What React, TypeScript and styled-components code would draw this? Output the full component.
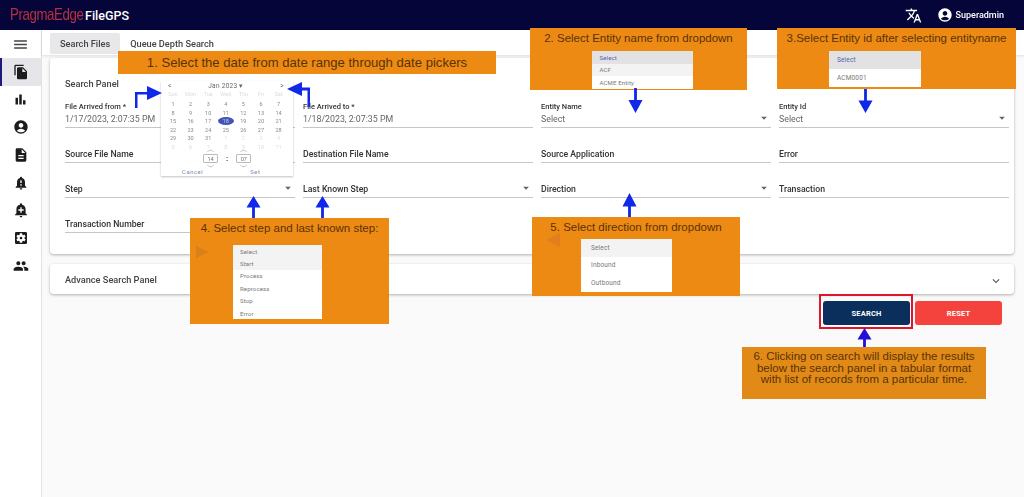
import styled, { createGlobalStyle } from 'styled-components';
import {
  MdAccountCircle,
  MdAddAlert,
  MdArrowDropDown,
  MdBarChart,
  MdDescription,
  MdExpandMore,
  MdFileCopy,
  MdMenu,
  MdNotificationImportant,
  MdPeople,
  MdSettingsApplications,
  MdTranslate,
} from 'react-icons/md';

const DAYS = ['Sun', 'Mon', 'Tue', 'Wed', 'Thu', 'Fri', 'Sat'];
const WEEKS = [
  [1, 2, 3, 4, 5, 6, 7],
  [8, 9, 10, 11, 12, 13, 14],
  [15, 16, 17, 18, 19, 20, 21],
  [22, 23, 24, 25, 26, 27, 28],
  [29, 30, 31, 1, 2, 3, 4],
  [5, 6, 7, 8, 9, 10, 11],
];

const FIELDS = [
  { label: 'File Arrived from *', value: '1/17/2023, 2:07:35 PM' },
  { label: 'File Arrived to *', value: '1/18/2023, 2:07:35 PM' },
  { label: 'Entity Name', value: 'Select', select: true },
  { label: 'Entity Id', value: 'Select', select: true },
  { label: 'Source File Name' },
  { label: 'Destination File Name' },
  { label: 'Source Application' },
  { label: 'Error' },
  { label: 'Step', select: true },
  { label: 'Last Known Step', select: true },
  { label: 'Direction', select: true },
  { label: 'Transaction' },
  { label: 'Transaction Number' },
];

function Arrow({ cx, y, h, dir, dark }: { cx: number; y: number; h: number; dir: 'up' | 'down'; dark?: boolean }) {
  const fill = dark ? '#2410d8' : '#1028e8';
  return (
    <ArrowSvg $x={cx - 7.5} $y={y} width="15" height={h} viewBox="0 0 16 27" preserveAspectRatio="none">
      {dir === 'up' ? (
        <path d="M8 0 L15.5 14 H9.5 V27 H6.5 V14 H0.5 Z" fill={fill} />
      ) : (
        <path d="M6.5 0 H9.5 V13 H15.5 L8 27 L0.5 13 H6.5 Z" fill={fill} />
      )}
    </ArrowSvg>
  );
}

export default function App() {
  return (
    <>
      <GlobalStyle />
      <Page>
        <Header>
          <Logo>
            <LogoMark>PragmaEdge</LogoMark>
            <LogoName>FileGPS</LogoName>
          </Logo>
          <HeaderRight>
            <MdTranslate size={17} />
            <UserBox>
              <MdAccountCircle size={16} />
              Superadmin
            </UserBox>
          </HeaderRight>
        </Header>
        <Body>
          <Sidebar>
            <MenuButton>
              <MdMenu size={17} />
            </MenuButton>
            <NavItem $active>
              <MdFileCopy size={16} />
            </NavItem>
            <NavItem>
              <MdBarChart size={15} />
            </NavItem>
            <NavItem>
              <MdAccountCircle size={16} />
            </NavItem>
            <NavItem>
              <MdDescription size={16} />
            </NavItem>
            <NavItem>
              <MdNotificationImportant size={16} />
            </NavItem>
            <NavItem>
              <MdAddAlert size={16} />
            </NavItem>
            <NavItem>
              <MdSettingsApplications size={16} />
            </NavItem>
            <NavItem>
              <MdPeople size={16} />
            </NavItem>
          </Sidebar>
          <Main>
            <Tabs>
              <Tab $active>Search Files</Tab>
              <Tab>Queue Depth Search</Tab>
            </Tabs>
            <Content>
              <Panel>
                <PanelTitle>Search Panel</PanelTitle>
                <FieldGrid>
                  {FIELDS.map((field) => (
                    <Field key={field.label} $tall={!!field.value}>
                      {field.value ? (
                        <>
                          <SmallLabel>{field.label}</SmallLabel>
                          <FieldValue>{field.value}</FieldValue>
                        </>
                      ) : (
                        <PlainLabel>{field.label}</PlainLabel>
                      )}
                      {field.select && (
                        <Caret>
                          <MdArrowDropDown size={14} />
                        </Caret>
                      )}
                    </Field>
                  ))}
                </FieldGrid>
              </Panel>
              <AdvancePanel>
                Advance Search Panel
                <Chevron size={14} />
              </AdvancePanel>
              <Actions>
                <SearchButton>SEARCH</SearchButton>
                <ResetButton>RESET</ResetButton>
              </Actions>
            </Content>
          </Main>
        </Body>

        <Note $x={118} $y={51} $w={378} $h={23}>
          <NoteTitle $size={13.1} $line={23}>
            1. Select the date from date range through date pickers
          </NoteTitle>
        </Note>
        <Calendar>
          <CalHead>
            <span>&lt;</span>
            <span>Jan 2023 ▾</span>
            <span>&gt;</span>
          </CalHead>
          <CalRow $weekdays>
            {DAYS.map((d) => (
              <span key={d}>{d}</span>
            ))}
          </CalRow>
          {WEEKS.map((week, i) => (
            <CalRow key={i} $muted={i === 5}>
              {week.map((d, j) => (
                <CalDay key={j} $selected={i === 2 && j === 3} $faded={i === 4 && j > 2}>
                  {d}
                </CalDay>
              ))}
            </CalRow>
          ))}
          <TimeRow>
            <TimeBox>14</TimeBox>
            <TimeColon>:</TimeColon>
            <TimeBox>07</TimeBox>
          </TimeRow>
          <CalFoot>
            <span>Cancel</span>
            <span>Set</span>
          </CalFoot>
        </Calendar>
        <CornerArrow $x={135} $y={86} width="27" height="22" viewBox="0 0 27 22">
          <path d="M0 22 V6 H12 V0 L27 7 L12 14 V8.5 H2.5 V22 Z" fill="#1028e8" />
        </CornerArrow>
        <CornerArrow $x={287} $y={82} width="24" height="25" viewBox="0 0 24 25">
          <path d="M0 7 L15 0 V5.5 H23 V25 H20.5 V8.5 H15 V14 Z" fill="#1028e8" />
        </CornerArrow>

        <Note $x={530} $y={28} $w={217} $h={62}>
          <NoteTitle>2. Select Entity name from dropdown</NoteTitle>
          <MiniMenu $w={101} $top={2} $rowH={12.6} $shift={7} $pad={8} $font={6}>
            <MiniRow $tone="dark" $accent>Select</MiniRow>
            <MiniRow $tone="light">ACF</MiniRow>
            <MiniRow>ACME Entity</MiniRow>
          </MiniMenu>
        </Note>
        <Arrow cx={635} y={88} h={25} dir="down" />

        <Note $x={777} $y={28} $w={239} $h={61}>
          <NoteTitle>3.Select Entity id after selecting entityname</NoteTitle>
          <MiniMenu $w={92} $top={2} $rowH={18} $shift={-43} $pad={8} $font={6.5}>
            <MiniRow $tone="dark" $accent>Select</MiniRow>
            <MiniRow>ACM0001</MiniRow>
          </MiniMenu>
        </Note>
        <Arrow cx={865} y={89} h={24} dir="down" />

        <Arrow cx={253} y={196} h={22} dir="up" />
        <Arrow cx={322} y={196} h={22} dir="up" />
        <Note $x={190} $y={218} $w={199} $h={106}>
          <NoteTitle>4. Select step and last known step:</NoteTitle>
          <GhostRight />
          <MiniMenu $w={89} $top={6} $rowH={12.4} $shift={-24} $pad={7} $font={6}>
            <MiniRow $tone="light">Select</MiniRow>
            <MiniRow $tone="light">Start</MiniRow>
            <MiniRow>Process</MiniRow>
            <MiniRow>Reprocess</MiniRow>
            <MiniRow>Stop</MiniRow>
            <MiniRow>Error</MiniRow>
          </MiniMenu>
        </Note>

        <Arrow cx={629} y={193} h={26} dir="up" />
        <Note $x={532} $y={217} $w={208} $h={79}>
          <NoteTitle>5. Select direction from dropdown</NoteTitle>
          <GhostLeft />
          <MiniMenu $w={91} $top={1} $rowH={17.5} $shift={-19} $pad={10} $font={6.5}>
            <MiniRow $tone="light">Select</MiniRow>
            <MiniRow>Inbound</MiniRow>
            <MiniRow>Outbound</MiniRow>
          </MiniMenu>
        </Note>

        <Arrow cx={864} y={328} h={22} dir="up" dark />
        <NoteBlock>
          6. Clicking on search will display the results
          <br />
          below the search panel in a tabular format
          <br />
          with list of records from a particular time.
        </NoteBlock>
      </Page>
    </>
  );
}

const GlobalStyle = createGlobalStyle`
  html, body {
    margin: 0;
    padding: 0;
    background: #fafafa;
  }
  body {
    font-family: Roboto, "Liberation Sans", sans-serif;
    overflow: hidden;
  }
`;

const Page = styled.div`
  position: relative;
  width: 1024px;
  height: 497px;
  overflow: hidden;
  display: flex;
  flex-direction: column;
  filter: blur(0.4px);
`;

const Header = styled.header`
  height: 30px;
  flex: none;
  background: #05053a;
  color: #fff;
  display: flex;
  align-items: center;
  justify-content: space-between;
  padding: 0 20px 0 10px;
`;

const Logo = styled.div`
  display: flex;
  align-items: center;
  gap: 4px;
`;

const LogoMark = styled.span`
  width: 71px;
  display: inline-block;
  font-family: 'Liberation Sans', sans-serif;
  font-size: 17px;
  letter-spacing: -0.5px;
  white-space: nowrap;
  color: #b83040;
  transform: scaleX(0.78);
  transform-origin: left center;
`;

const LogoName = styled.span`
  font-size: 12.5px;
  font-weight: 500;
`;

const HeaderRight = styled.div`
  display: flex;
  align-items: center;
  gap: 15px;
`;

const UserBox = styled.div`
  display: flex;
  align-items: center;
  gap: 3px;
  font-size: 9px;
  font-weight: 500;
`;

const Body = styled.div`
  flex: 1;
  display: flex;
  min-height: 0;
`;

const Sidebar = styled.nav`
  width: 41px;
  flex: none;
  background: #fff;
  border-right: 1px solid #e2e2e2;
  color: #1c1c1c;
`;

const MenuButton = styled.div`
  height: 28px;
  display: flex;
  align-items: center;
  justify-content: center;
  color: #444;
`;

const NavItem = styled.div<{ $active?: boolean }>`
  height: 27.7px;
  display: flex;
  align-items: center;
  justify-content: center;
  box-sizing: border-box;
  background: ${(p) => (p.$active ? '#e6e6ea' : 'transparent')};
  border-left: 2px solid ${(p) => (p.$active ? '#1a1a7a' : 'transparent')};
  padding-right: 2px;
`;

const Main = styled.main`
  flex: 1;
  min-width: 0;
  display: flex;
  flex-direction: column;
`;

const Tabs = styled.div`
  height: 25px;
  flex: none;
  background: #fff;
  box-shadow: 0 1px 3px rgba(0, 0, 0, 0.12);
  display: flex;
  align-items: flex-start;
  padding: 3px 0 0 8px;
  box-sizing: border-box;
`;

const Tab = styled.div<{ $active?: boolean }>`
  height: 21px;
  padding: 0 10px;
  display: flex;
  align-items: center;
  font-size: 9.2px;
  font-weight: 500;
  color: #444;
  border-radius: 2px;
  background: ${(p) => (p.$active ? '#e8e8ea' : 'transparent')};
`;

const Content = styled.div`
  padding: 3px 10px 0 8px;
`;

const Panel = styled.section`
  background: #fff;
  border-radius: 4px;
  box-shadow: 0 1px 3px rgba(0, 0, 0, 0.3);
  height: 196px;
  padding: 20px 15px 0;
  box-sizing: border-box;
`;

const PanelTitle = styled.div`
  font-size: 9.2px;
  font-weight: 500;
  color: #444;
  line-height: 12px;
`;

const FieldGrid = styled.div`
  margin-top: 7px;
  display: grid;
  grid-template-columns: repeat(4, 230px);
  column-gap: 8px;
  grid-auto-rows: 35px;
`;

const Field = styled.div<{ $tall?: boolean }>`
  position: relative;
  display: flex;
  flex-direction: column;
  justify-content: flex-end;
  height: ${(p) => (p.$tall ? '27px' : '20px')};
  align-self: end;
  margin-bottom: 4px;
  border-bottom: 1px solid #c6c6c6;
`;

const SmallLabel = styled.label`
  font-size: 7.5px;
  font-weight: 500;
  color: #333;
  line-height: 10px;
`;

const FieldValue = styled.div`
  font-size: 8.8px;
  color: #666;
  line-height: 14px;
  padding-bottom: 1px;
`;

const PlainLabel = styled.div`
  font-size: 8.7px;
  font-weight: 500;
  color: #333;
  line-height: 16px;
`;

const Caret = styled.span`
  position: absolute;
  right: 0;
  bottom: 2px;
  color: #666;
  display: flex;
`;

const AdvancePanel = styled.section`
  margin-top: 10px;
  height: 30px;
  background: #fff;
  border-radius: 4px;
  box-shadow: 0 1px 3px rgba(0, 0, 0, 0.3);
  display: flex;
  align-items: center;
  justify-content: space-between;
  padding: 0 11px 0 15px;
  font-size: 9.2px;
  font-weight: 500;
  color: #444;
`;

const Chevron = styled(MdExpandMore)`
  margin-top: 4px;
  color: #555;
`;

const Actions = styled.div`
  margin-top: 7px;
  display: flex;
  justify-content: flex-end;
  gap: 5px;
  padding-right: 12px;
`;

const BaseButton = styled.button`
  position: relative;
  width: 87px;
  height: 24px;
  border: none;
  border-radius: 3px;
  color: #fff;
  font-family: Roboto, sans-serif;
  font-size: 7.5px;
  font-weight: 700;
  letter-spacing: 0.2px;
  padding: 0;
`;

const SearchButton = styled(BaseButton)`
  background: #0b2f5c;

  &::after {
    content: '';
    position: absolute;
    inset: -7px -3px -4px -4px;
    border: 2px solid #e0142c;
  }
`;

const ResetButton = styled(BaseButton)`
  background: #f4433c;
`;

const Note = styled.div<{ $x: number; $y: number; $w: number; $h: number }>`
  position: absolute;
  left: ${(p) => p.$x}px;
  top: ${(p) => p.$y}px;
  width: ${(p) => p.$w}px;
  height: ${(p) => p.$h}px;
  background: #ec8a13;
  display: flex;
  flex-direction: column;
  align-items: center;
`;

const NoteTitle = styled.div<{ $size?: number; $line?: number }>`
  font-family: 'Liberation Sans', sans-serif;
  font-size: ${(p) => p.$size ?? 11.5}px;
  line-height: ${(p) => p.$line ?? 21}px;
  color: #5a3206;
  white-space: nowrap;
`;

const NoteBlock = styled.div`
  position: absolute;
  left: 742px;
  top: 347px;
  width: 244px;
  height: 52px;
  padding-top: 4px;
  box-sizing: border-box;
  background: #e18a17;
  font-family: 'Liberation Sans', sans-serif;
  font-size: 11.5px;
  line-height: 11.7px;
  color: #5a3206;
  text-align: center;
  white-space: nowrap;
`;

const MiniMenu = styled.div<{
  $w: number;
  $top: number;
  $rowH: number;
  $shift: number;
  $pad: number;
  $font: number;
}>`
  width: ${(p) => p.$w}px;
  margin-top: ${(p) => p.$top}px;
  margin-left: ${(p) => Math.max(p.$shift, 0)}px;
  margin-right: ${(p) => Math.max(-p.$shift, 0)}px;
  background: #fff;
  display: grid;
  grid-auto-rows: ${(p) => p.$rowH}px;
  font-size: ${(p) => p.$font}px;

  > div {
    padding-left: ${(p) => p.$pad}px;
  }
`;

const MiniRow = styled.div<{ $tone?: 'dark' | 'light'; $accent?: boolean }>`
  display: flex;
  align-items: center;
  letter-spacing: 0.15px;
  color: ${(p) => (p.$accent ? '#5560b0' : '#777')};
  background: ${(p) =>
    p.$tone === 'dark' ? '#e2e2e2' : p.$tone === 'light' ? '#f3f3f3' : '#fff'};
`;

const GhostRight = styled.span`
  position: absolute;
  left: 6px;
  top: 28px;
  border-left: 13px solid #d9801a;
  border-top: 6px solid transparent;
  border-bottom: 6px solid transparent;
`;

const GhostLeft = styled.span`
  position: absolute;
  left: 15px;
  top: 16px;
  border-right: 13px solid #e07f1c;
  border-top: 7px solid transparent;
  border-bottom: 7px solid transparent;
`;

const ArrowSvg = styled.svg<{ $x: number; $y: number }>`
  position: absolute;
  left: ${(p) => p.$x}px;
  top: ${(p) => p.$y}px;
`;

const CornerArrow = styled.svg<{ $x: number; $y: number }>`
  position: absolute;
  left: ${(p) => p.$x}px;
  top: ${(p) => p.$y}px;
`;

const Calendar = styled.div`
  position: absolute;
  left: 161px;
  top: 81px;
  width: 132px;
  height: 95px;
  background: #fff;
  box-shadow: 0 1px 2px rgba(0, 0, 0, 0.25);
  font-size: 5.5px;
  color: #777;
`;

const CalHead = styled.div`
  height: 10px;
  display: flex;
  align-items: center;
  justify-content: space-between;
  padding: 0 9px 0 7px;
  font-size: 6.5px;
  color: #666;
  letter-spacing: 0.3px;
`;

const CalRow = styled.div<{ $muted?: boolean; $weekdays?: boolean }>`
  height: ${(p) => (p.$weekdays ? '6px' : '8.5px')};
  margin-bottom: ${(p) => (p.$weekdays ? '3px' : '0')};
  display: grid;
  grid-template-columns: repeat(7, 17.6px);
  justify-items: center;
  align-items: center;
  padding-left: 3.2px;
  color: ${(p) => (p.$muted || p.$weekdays ? '#dcdcdc' : '#8a8a8a')};
`;

const CalDay = styled.span<{ $selected?: boolean; $faded?: boolean }>`
  width: 16px;
  height: 8px;
  display: flex;
  align-items: center;
  justify-content: center;
  border-radius: 50%;
  background: ${(p) => (p.$selected ? '#4055b5' : 'transparent')};
  color: ${(p) => (p.$selected ? '#c8cfe8' : p.$faded ? '#e2e2e2' : 'inherit')};
`;

const TimeRow = styled.div`
  height: 15px;
  padding-left: 42px;
  display: flex;
  align-items: center;
  gap: 8px;
`;

const TimeColon = styled.span`
  font-size: 8px;
  font-weight: 700;
  color: #333;
`;

const TimeBox = styled.span`
  position: relative;
  width: 13px;
  height: 7px;
  display: flex;
  align-items: center;
  justify-content: center;
  border: 1px solid #bbb;
  border-radius: 1px;

  &::before,
  &::after {
    content: '';
    position: absolute;
    left: 4px;
    width: 4px;
    height: 4px;
    border: 1px solid #aaa;
    border-right: none;
    border-bottom: none;
    transform: scaleY(0.5) rotate(45deg);
  }

  &::before {
    top: -6px;
  }

  &::after {
    bottom: -6px;
    transform: scaleY(0.5) rotate(225deg);
  }
`;

const CalFoot = styled.div`
  height: 10px;
  display: flex;
  align-items: center;
  gap: 47px;
  padding-left: 21px;
  font-size: 6px;
  letter-spacing: 0.5px;
  color: #7a8ab0;
`;
